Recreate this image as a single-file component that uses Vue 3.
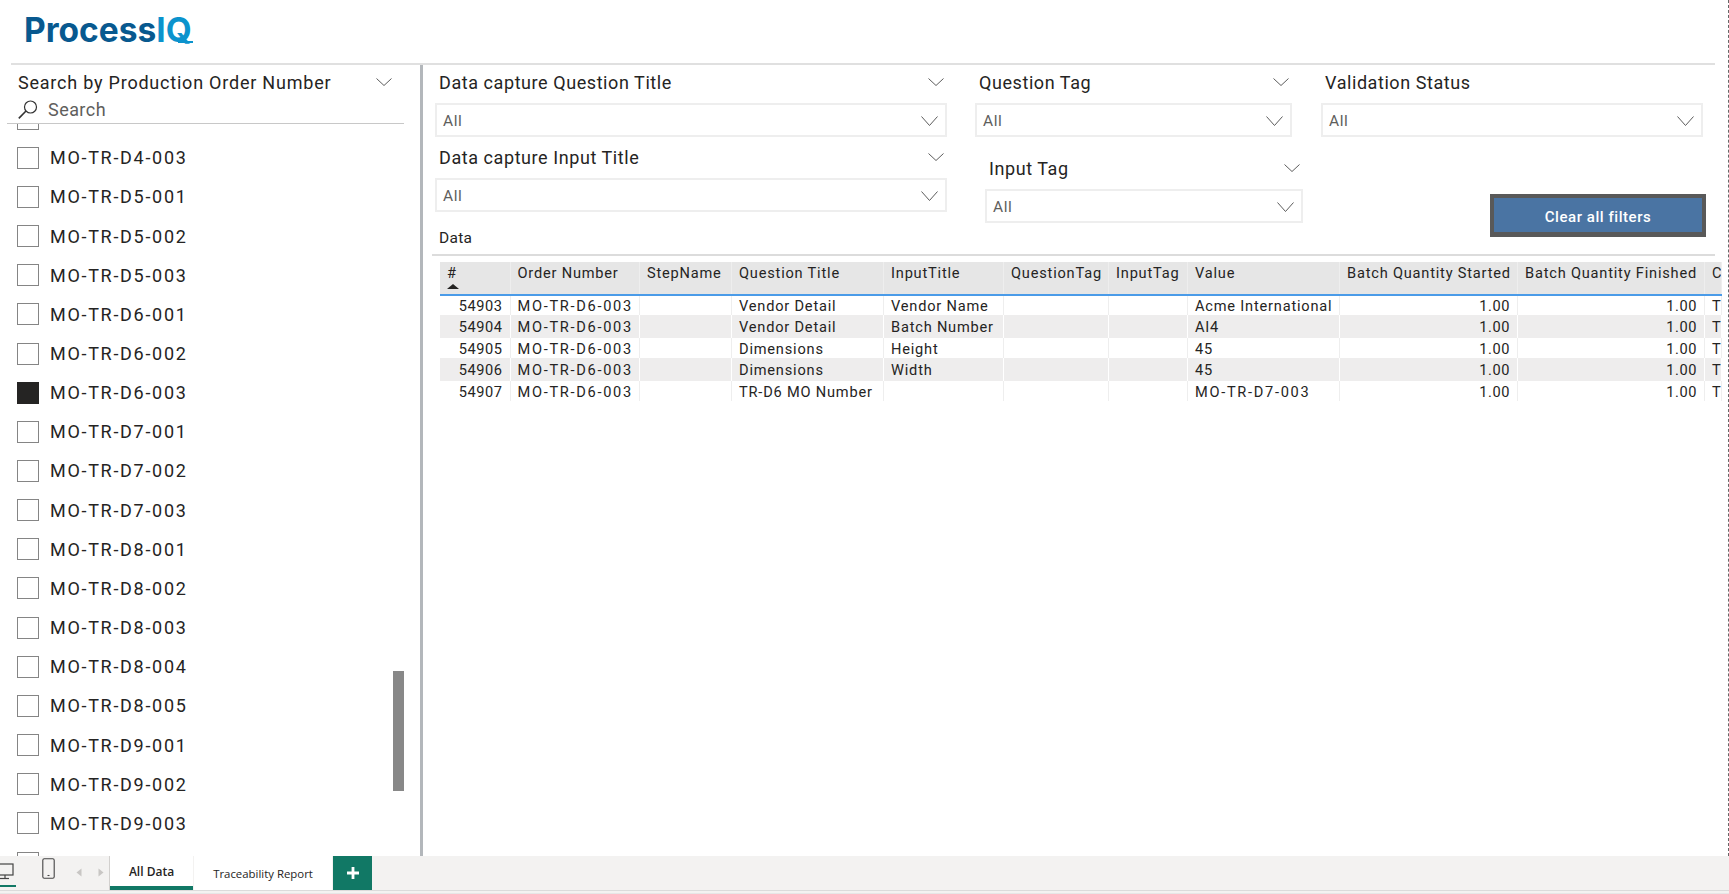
<script setup>
// first row of the slicer is scrolled mostly out of view, only its box shows
const orders = [
  '', 'MO-TR-D4-003',
  'MO-TR-D5-001', 'MO-TR-D5-002', 'MO-TR-D5-003',
  'MO-TR-D6-001', 'MO-TR-D6-002', 'MO-TR-D6-003',
  'MO-TR-D7-001', 'MO-TR-D7-002', 'MO-TR-D7-003',
  'MO-TR-D8-001', 'MO-TR-D8-002', 'MO-TR-D8-003', 'MO-TR-D8-004', 'MO-TR-D8-005',
  'MO-TR-D9-001', 'MO-TR-D9-002', 'MO-TR-D9-003', 'MO-TR-D9-004'
]
const selected = 'MO-TR-D6-003'

const columns = [
  { key: 'id', label: '#', width: 70, num: true },
  { key: 'order', label: 'Order Number', width: 129.5 },
  { key: 'step', label: 'StepName', width: 92 },
  { key: 'question', label: 'Question Title', width: 152 },
  { key: 'input', label: 'InputTitle', width: 120 },
  { key: 'qtag', label: 'QuestionTag', width: 105 },
  { key: 'itag', label: 'InputTag', width: 79 },
  { key: 'value', label: 'Value', width: 152 },
  { key: 'started', label: 'Batch Quantity Started', width: 178, num: true },
  { key: 'finished', label: 'Batch Quantity Finished', width: 187, num: true },
  { key: 'c', label: 'C', width: 17 }
]

const base = { order: 'MO-TR-D6-003', step: '', qtag: '', itag: '', started: '1.00', finished: '1.00', c: 'T' }
const rows = [
  { ...base, id: 54903, question: 'Vendor Detail', input: 'Vendor Name', value: 'Acme International' },
  { ...base, id: 54904, question: 'Vendor Detail', input: 'Batch Number', value: 'AI4' },
  { ...base, id: 54905, question: 'Dimensions', input: 'Height', value: '45' },
  { ...base, id: 54906, question: 'Dimensions', input: 'Width', value: '45' },
  { ...base, id: 54907, question: 'TR-D6 MO Number', input: '', value: 'MO-TR-D7-003' }
]

const isCode = (val) => String(val).startsWith('MO-')
</script>

<template>
  <div class="page">
    <div class="canvas">
      <header class="top">
        <div class="logo">Process<span class="logo-iq">IQ</span></div>
      </header>

      <main class="main">
        <aside class="sidebar">
          <div class="side-head">
            <span class="slicer-title side-title">Search by Production Order Number</span>
            <svg class="chev" width="16" height="8" viewBox="0 0 16 8"><polyline points="0.5,0.5 8,7.5 15.5,0.5" /></svg>
          </div>
          <div class="search">
            <svg width="20" height="19" viewBox="0 0 20 19" fill="none" stroke="#333" stroke-width="1.2">
              <circle cx="12.5" cy="7" r="6" />
              <line x1="8" y1="11" x2="0.8" y2="18.4" stroke-width="1.6" />
            </svg>
            <span>Search</span>
          </div>
          <div class="list">
            <div class="list-inner">
              <div v-for="o in orders" :key="o" class="item">
                <span class="box" :class="{ checked: o === selected }"></span>
                <span>{{ o }}</span>
              </div>
            </div>
            <div class="thumb"></div>
          </div>
        </aside>

        <section class="content">
          <div class="filters">
            <div class="col col-a">
              <div class="slicer">
                <div class="slicer-head">
                  <span class="slicer-title">Data capture Question Title</span>
                  <svg class="chev" width="16" height="8" viewBox="0 0 16 8"><polyline points="0.5,0.5 8,7.5 15.5,0.5" /></svg>
                </div>
                <div class="drop">All<svg class="chev" width="17" height="10" viewBox="0 0 17 10"><polyline points="0.5,0.5 8.5,9.5 16.5,0.5" /></svg></div>
              </div>
              <div class="slicer slicer-second">
                <div class="slicer-head">
                  <span class="slicer-title">Data capture Input Title</span>
                  <svg class="chev" width="16" height="8" viewBox="0 0 16 8"><polyline points="0.5,0.5 8,7.5 15.5,0.5" /></svg>
                </div>
                <div class="drop">All<svg class="chev" width="17" height="10" viewBox="0 0 17 10"><polyline points="0.5,0.5 8.5,9.5 16.5,0.5" /></svg></div>
              </div>
              <div class="data-label">Data</div>
            </div>

            <div class="col col-b">
              <div class="slicer tag-q">
                <div class="slicer-head">
                  <span class="slicer-title">Question Tag</span>
                  <svg class="chev" width="16" height="8" viewBox="0 0 16 8"><polyline points="0.5,0.5 8,7.5 15.5,0.5" /></svg>
                </div>
                <div class="drop">All<svg class="chev" width="17" height="10" viewBox="0 0 17 10"><polyline points="0.5,0.5 8.5,9.5 16.5,0.5" /></svg></div>
              </div>
              <div class="slicer tag-i">
                <div class="slicer-head">
                  <span class="slicer-title">Input Tag</span>
                  <svg class="chev" width="16" height="8" viewBox="0 0 16 8"><polyline points="0.5,0.5 8,7.5 15.5,0.5" /></svg>
                </div>
                <div class="drop">All<svg class="chev" width="17" height="10" viewBox="0 0 17 10"><polyline points="0.5,0.5 8.5,9.5 16.5,0.5" /></svg></div>
              </div>
            </div>

            <div class="col col-c">
              <div class="slicer status">
                <div class="slicer-head">
                  <span class="slicer-title">Validation Status</span>
                </div>
                <div class="drop">All<svg class="chev" width="17" height="10" viewBox="0 0 17 10"><polyline points="0.5,0.5 8.5,9.5 16.5,0.5" /></svg></div>
              </div>
              <button class="clear">Clear all filters</button>
            </div>
          </div>

          <div class="table-wrap">
            <table class="grid">
              <colgroup>
                <col v-for="c in columns" :key="c.key" :style="{ width: c.width + 'px' }" />
              </colgroup>
              <thead>
                <tr>
                  <th v-for="c in columns" :key="c.key">
                    {{ c.label }}
                    <span v-if="c.key === 'id'" class="sort"></span>
                  </th>
                </tr>
              </thead>
              <tbody>
                <tr v-for="r in rows" :key="r.id">
                  <td v-for="c in columns" :key="c.key" :class="{ num: c.num, code: isCode(r[c.key]) }">{{ r[c.key] }}</td>
                </tr>
              </tbody>
            </table>
          </div>
        </section>
      </main>
    </div>

    <footer class="tabs">
      <div class="views">
        <span class="view view-desk">
          <svg width="14" height="18" viewBox="0 0 14 18" fill="none" stroke="#444" stroke-width="1.2">
            <rect x="-4" y="1" width="17" height="11" />
            <line x1="5" y1="12" x2="5" y2="15" />
            <line x1="0" y1="15.5" x2="9" y2="15.5" />
          </svg>
        </span>
        <svg class="phone" width="13" height="21" viewBox="0 0 13 21" fill="none" stroke="#444" stroke-width="1.1">
          <rect x="0.8" y="0.8" width="11.4" height="19.4" rx="1.5" />
          <line x1="5.5" y1="17.5" x2="7.5" y2="17.5" />
        </svg>
        <svg class="arrow" width="6" height="9" viewBox="0 0 6 9"><polygon points="5.5,0.5 0.5,4.5 5.5,8.5" /></svg>
        <svg class="arrow arrow-r" width="6" height="9" viewBox="0 0 6 9"><polygon points="0.5,0.5 5.5,4.5 0.5,8.5" /></svg>
      </div>
      <div class="tab active">All Data</div>
      <div class="tab other">Traceability Report</div>
      <div class="tab-add">
        <svg width="12" height="12" viewBox="0 0 12 12"><path d="M4.6 0h2.8v4.6H12v2.8H7.4V12H4.6V7.4H0V4.6h4.6z" fill="#fff" /></svg>
      </div>
    </footer>
  </div>
</template>

<style>
html, body {
  margin: 0;
  height: 100%;
  overflow: hidden;
  background: #fff;
}
</style>

<style scoped>
.page {
  width: 1729px;
  height: 894px;
  display: flex;
  flex-direction: column;
  font-family: Roboto, "Noto Sans", sans-serif;
  color: #252423;
  background: #f3f2f1;
}

.canvas {
  flex: 1;
  min-height: 0;
  display: flex;
  flex-direction: column;
  background: #fff;
  border-right: 1px dashed #666;
}

.top {
  height: 51px;
  flex: none;
  margin: 0 13px 0 11px;
  padding: 12px 0 0 13px;
  border-bottom: 2px solid #e0e0e0;
}

.logo {
  font-family: Inter, sans-serif;
  font-size: 33.5px;
  font-weight: 700;
  line-height: 36px;
  color: #08598f;
}

.logo-iq {
  position: relative;
  color: #0b93cd;
}

.logo-iq::after {
  content: "";
  position: absolute;
  right: -1px;
  bottom: 7px;
  width: 15px;
  height: 2px;
  background: #0b93cd;
}

.main {
  flex: 1;
  min-height: 0;
  display: flex;
}

.sidebar {
  width: 423px;
  flex: none;
  box-sizing: border-box;
  border-right: 3px solid #b3b7bb;
  display: flex;
  flex-direction: column;
}

.side-head {
  height: 34px;
  padding: 0 28px 0 18px;
  display: flex;
  align-items: center;
  justify-content: space-between;
}

.slicer-title {
  font-size: 18px;
  letter-spacing: 0.57px;
  color: #252423;
}

.side-title {
  letter-spacing: 0.78px;
}

.chev {
  fill: none;
  stroke: #5c5c5c;
  stroke-width: 1;
  flex: none;
}

.search {
  height: 24px;
  box-sizing: border-box;
  margin: 0 16px 0 7px;
  padding: 0 0 4px 11px;
  display: flex;
  align-items: center;
  gap: 10px;
  font-size: 18px;
  letter-spacing: 0.45px;
  color: #605e5c;
}

.list {
  flex: 1;
  min-height: 0;
  position: relative;
  overflow: hidden;
  margin-left: 7px;
  margin-right: 16px;
  border-top: 1px solid #c8c8c8;
}

.list-inner {
  margin-top: -25px;
  padding-left: 10px;
}

.item {
  height: 39.17px;
  display: flex;
  align-items: center;
  gap: 11px;
  font-size: 18px;
  letter-spacing: 1.7px;
  color: #252423;
}

.box {
  width: 22px;
  height: 22px;
  box-sizing: border-box;
  border: 1px solid #858585;
  background: #fff;
  flex: none;
}

.box.checked {
  background: #252423;
  border-color: #252423;
}

.thumb {
  position: absolute;
  top: 547px;
  left: 386px;
  width: 11px;
  height: 120px;
  background: #888;
}

.content {
  flex: 1;
  min-width: 0;
  display: flex;
  flex-direction: column;
}

.filters {
  height: 189px;
  flex: none;
  margin: 0 13px 0 9px;
  padding-left: 3px;
  display: flex;
  border-bottom: 2px solid #dcdcdc;
}

.col {
  display: flex;
  flex-direction: column;
}

.col-a {
  width: 512px;
  margin-right: 28px;
}

.col-b {
  width: 328px;
  margin-right: 18px;
}

.col-c {
  width: 385px;
}

.slicer-head {
  height: 34px;
  margin-bottom: 4px;
  padding: 0 3px 0 4px;
  display: flex;
  align-items: center;
  justify-content: space-between;
}

.slicer-second {
  margin-top: 3px;
}

.drop {
  height: 34px;
  box-sizing: border-box;
  border: 2px solid #eeeeee;
  padding: 2px 7px 0 6px;
  display: flex;
  align-items: center;
  justify-content: space-between;
  font-size: 15.5px;
  letter-spacing: 0.6px;
  color: #605e5c;
}

.tag-q {
  width: 317px;
}

.tag-i {
  width: 318px;
  margin: 14px 0 0 10px;
}

.status {
  width: 382px;
}

.clear {
  width: 216px;
  height: 43px;
  margin: 57px 0 0 auto;
  padding: 3px 0 0;
  box-sizing: border-box;
  border: 4px solid #595959;
  border-bottom-width: 5px;
  background: #4a74a3;
  color: #fff;
  font-family: Roboto, sans-serif;
  font-size: 15px;
  font-weight: 500;
  letter-spacing: 0.55px;
}

.data-label {
  height: 20px;
  margin-top: 16px;
  padding-left: 4px;
  font-size: 15.5px;
  line-height: 20px;
  letter-spacing: 0.3px;
}

.table-wrap {
  margin: 6px 0 0 17px;
  width: 1282px;
  overflow: hidden;
}

.grid {
  width: 1282px;
  table-layout: fixed;
  border-collapse: collapse;
  font-size: 14.6px;
  letter-spacing: 0.8px;
  color: #252423;
}

.grid th {
  height: 33px;
  padding: 2px 0 0 7px;
  box-sizing: border-box;
  vertical-align: top;
  text-align: left;
  font-weight: 400;
  white-space: nowrap;
  overflow: hidden;
  background: #e6e6e6;
  border-bottom: 2px solid #4a9be8;
  border-right: 1px solid #eeeeee;
}

.sort {
  display: block;
  width: 0;
  height: 0;
  margin-top: 2px;
  border-left: 6px solid transparent;
  border-right: 6px solid transparent;
  border-bottom: 5px solid #252423;
}

.grid td {
  height: 20px;
  padding: 2px 7px 0;
  box-sizing: border-box;
  line-height: 17px;
  white-space: nowrap;
  overflow: hidden;
  border-right: 1px solid #eeeeee;
}

.grid tbody tr:nth-child(even) td {
  height: 23px;
  background: #eeeded;
  border-right-color: #fff;
}

.grid td.num {
  text-align: right;
  letter-spacing: 0.55px;
}

.grid td.code {
  letter-spacing: 1.7px;
}

.tabs {
  height: 38px;
  flex: none;
  display: flex;
  align-items: stretch;
  box-sizing: border-box;
  padding-bottom: 3px;
  position: relative;
  background: #f3f2f1;
  border-bottom: 1px solid #e6e6e6;
  font-family: "Open Sans", sans-serif;
  font-size: 11.4px;
}

.tabs::after {
  content: "";
  position: absolute;
  left: 0;
  right: 0;
  bottom: 2px;
  height: 1px;
  background: #dbdbdb;
}

.views {
  width: 110px;
  box-sizing: border-box;
  border-right: 1px solid #d2d0ce;
  display: flex;
  align-items: center;
}

.view-desk {
  width: 16px;
  height: 31px;
  box-sizing: border-box;
  padding-top: 7px;
  border-bottom: 2px solid #117865;
  align-self: flex-start;
}

.phone {
  margin: -10px 0 0 26px;
}

.arrow {
  fill: #c8c6c4;
  margin: -2px 0 0 21px;
}

.arrow-r {
  margin-left: 16px;
}

.tab {
  display: flex;
  align-items: center;
  justify-content: center;
  background: #fff;
  color: #252423;
}

.active {
  width: 83px;
  box-sizing: border-box;
  border-bottom: 4px solid #117865;
  font-size: 12px;
  font-weight: 600;
  margin-right: 1px;
}

.other {
  width: 138px;
  margin-right: 1px;
}

.tab-add {
  width: 39px;
  display: flex;
  align-items: center;
  justify-content: center;
  background: #117865;
}
</style>
